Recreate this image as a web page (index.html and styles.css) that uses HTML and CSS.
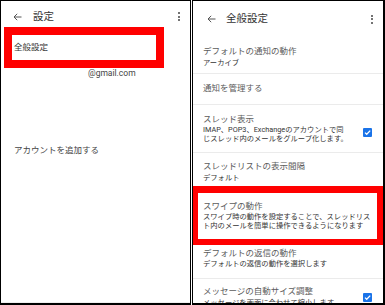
FILE: index.html
```html
<!DOCTYPE html>
<html lang="ja">
<head>
<meta charset="utf-8">
<link rel="stylesheet" href="styles.css">
</head>
<body>
<div class="shot">
  <section class="panel left">
    <header class="bar">
      <svg class="back" width="9" height="8" viewBox="0 0 9 8"><path d="M8.5 4H1M4.2 0.8L1 4l3.2 3.2" fill="none" stroke="#555" stroke-width="1"/></svg>
      <span class="bar-title">設定</span>
      <span class="kebab"><i></i><i></i><i></i></span>
    </header>
    <div class="mark mark-left"><span class="item-text">全般設定</span></div>
    <div class="account">@gmail.com</div>
    <div class="add">アカウントを追加する</div>
    <div class="nav-line"></div>
  </section>
  <section class="panel right">
    <header class="bar bar-r">
      <svg class="back" width="9" height="8" viewBox="0 0 9 8"><path d="M8.5 4H1M4.2 0.8L1 4l3.2 3.2" fill="none" stroke="#555" stroke-width="1"/></svg>
      <span class="bar-title">全般設定</span>
      <span class="kebab"><i></i><i></i><i></i></span>
    </header>
    <div class="row r1">
      <div class="txt"><div class="t">デフォルトの通知の動作</div><div class="s">アーカイブ</div></div>
    </div>
    <div class="row r2">
      <div class="txt"><div class="t">通知を管理する</div></div>
    </div>
    <div class="row r3">
      <div class="txt"><div class="t">スレッド表示</div><div class="s">IMAP、POP3、Exchangeのアカウントで同<br>じスレッド内のメールをグループ化します。</div></div>
      <span class="check"><svg width="9" height="9" viewBox="0 0 9 9"><path d="M2 4.6l1.7 1.7L7.2 2.6" fill="none" stroke="#fff" stroke-width="1.3"/></svg></span>
    </div>
    <div class="row r4 nob">
      <div class="txt"><div class="t">スレッドリストの表示間隔</div><div class="s">デフォルト</div></div>
    </div>
    <div class="mark mark-right">
      <div class="t">スワイプの動作</div>
      <div class="s">スワイプ時の動作を設定することで、スレッドリス<br>ト内のメールを簡単に操作できるようになります</div>
    </div>
    <div class="row r6">
      <div class="txt"><div class="t">デフォルトの返信の動作</div><div class="s">デフォルトの返信の動作を選択します</div></div>
    </div>
    <div class="row r7 nob">
      <div class="txt"><div class="t">メッセージの自動サイズ調整</div><div class="s">メッセージを画面に合わせて縮小します</div></div>
      <span class="check"><svg width="9" height="9" viewBox="0 0 9 9"><path d="M2 4.6l1.7 1.7L7.2 2.6" fill="none" stroke="#fff" stroke-width="1.3"/></svg></span>
    </div>
  </section>
</div>
</body>
</html>
```
FILE: styles.css
```css
* { box-sizing: border-box; margin: 0; padding: 0; }
html, body { width: 385px; height: 305px; overflow: hidden; background: #fff; }
body {
  font-family: Roboto, "Noto Sans CJK JP", sans-serif;
  color: #333;
}
.shot {
  display: flex;
  gap: 1px;
  width: 385px;
  height: 305px;
}
.panel {
  display: flex;
  flex-direction: column;
  height: 305px;
  border: 1px solid #000;
  border-bottom-width: 2px;
  overflow: hidden;
  background: #fff;
}
.left { width: 191px; }
.right { width: 193px; border-right-width: 2px; }

.bar {
  display: flex;
  align-items: center;
  height: 26px;
  padding: 5px 0 0 12px;
  flex-shrink: 0;
}
.bar-r { height: 36px; padding: 0 0 0 14px; }
.back { display: block; flex-shrink: 0; }
.bar-title {
  margin-left: 11px;
  font-size: 10.5px;
  line-height: 12px;
  color: #333;
}
.bar-r .bar-title { margin-left: 10px; }
.kebab {
  margin-left: auto;
  margin-right: 10px;
  display: flex;
  flex-direction: column;
  gap: 1.5px;
}
.bar-r .kebab { margin-right: 10px; }
.kebab i {
  display: block;
  width: 2px;
  height: 2px;
  border-radius: 50%;
  background: #444;
}

.mark { border: 8px solid #f00; background: #fff; flex-shrink: 0; }
.mark-left {
  margin-left: 3px;
  width: 160px;
  height: 41px;
  display: flex;
  align-items: center;
  padding-left: 2px;
}
.item-text { font-size: 8.5px; line-height: 11px; color: #333; }
.account {
  height: 10px;
  margin-top: 0;
  padding-left: 87px;
  font-size: 8.5px;
  line-height: 10px;
  color: #444;
  flex-shrink: 0;
}
.add {
  margin-top: 67px;
  padding-left: 13px;
  font-size: 8.5px;
  line-height: 11px;
  color: #444;
  flex-shrink: 0;
}
.nav-line {
  margin-top: auto;
  margin-bottom: 0;
  height: 1px;
  background: #eee;
  flex-shrink: 0;
}

.row {
  display: flex;
  align-items: center;
  padding-left: 10px;
  padding-right: 11px;
  border-bottom: 1px solid #ebebeb;
  flex-shrink: 0;
}
.row .txt { flex: 1; align-self: flex-start; }
.nob { border-bottom: none; }
.t { font-size: 8.5px; line-height: 11px; color: #5c5c5c; white-space: nowrap; }
.s { font-size: 7.3px; line-height: 9px; color: #333; white-space: nowrap; }
.r1 { height: 37px; padding-top: 9px; }
.r1 .s { margin-top: 1px; }
.r2 { height: 31px; padding-top: 9px; }
.r3 { height: 48px; padding-top: 8.5px; }
.r4 { height: 33px; padding-top: 7.5px; }
.r4 .s { margin-top: 1px; }
.mark-right {
  margin-left: -1px;
  height: 59px;
  border-width: 7px 6px 6px 6px;
  padding: 8px 0 0 5px;
}
.mark-right .t { line-height: 11px; }
.r6 { height: 34px; padding-top: 3px; }
.r7 { height: 30px; padding-top: 7px; }
.r7 .s { margin-top: 1px; }
.check {
  width: 9px;
  height: 9px;
  background: #1a73e8;
  border-radius: 1px;
  display: flex;
  align-items: center;
  justify-content: center;
  flex-shrink: 0;
}
.r3 .check { margin-top: -1px; }
.r7 .check { align-self: flex-start; margin-top: 7px; }
```
